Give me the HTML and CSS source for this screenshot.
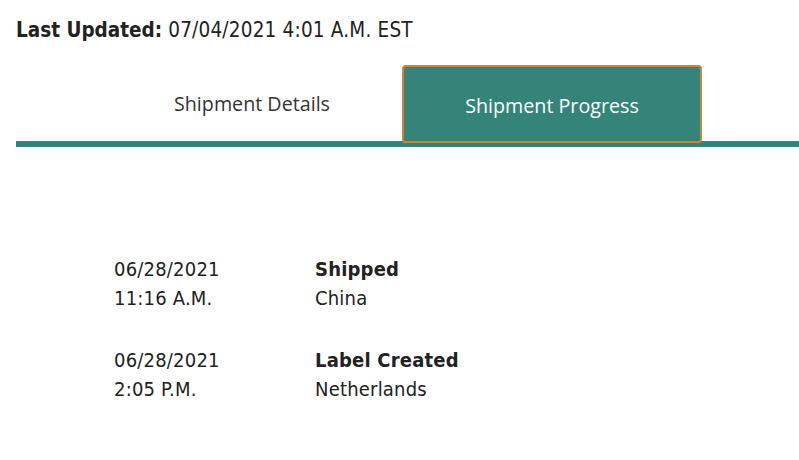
FILE: index.html
```html
<!DOCTYPE html>
<html>
<head>
<meta charset="utf-8">
<link rel="stylesheet" href="styles.css">
</head>
<body>
<div class="page">
  <div class="updated"><b>Last Updated:</b> 07/04/2021 4:01 A.M. EST</div>
  <div class="tabs">
    <div class="tab">Shipment Details</div>
    <div class="tab active">Shipment Progress</div>
  </div>
  <div class="progress">
    <div class="row">
      <div class="when">06/28/2021<br>11:16 A.M.</div>
      <div class="what"><b>Shipped</b><br>China</div>
    </div>
    <div class="row">
      <div class="when">06/28/2021<br>2:05 P.M.</div>
      <div class="what"><b>Label Created</b><br>Netherlands</div>
    </div>
  </div>
</div>
</body>
</html>
```
FILE: styles.css
```css
html, body { margin: 0; padding: 0; background: #fff; }
body { font-family: "DejaVu Sans Condensed", "DejaVu Sans", Verdana, sans-serif; color: #222; overflow: hidden; }
.page { padding: 16px 0 0 16px; }
.updated { font-size: 20.5px; line-height: 28px; letter-spacing: 0.2px; }
.updated b { letter-spacing: 0; }
.tabs {
  margin-top: 21px;
  display: flex;
  padding-left: 86px;
  border-bottom: 6px solid #35847a;
}
.tab {
  width: 300px;
  height: 76px;
  box-sizing: border-box;
  display: flex;
  align-items: center;
  justify-content: center;
  font-family: "Open Sans", "Noto Sans", sans-serif;
  font-size: 19.7px;
  color: #333;
  flex: none;
}
.tab.active {
  background: #35847a;
  color: #fff;
  border: 2px solid #c9853c;
  border-radius: 4px 4px 3px 3px;
  margin-bottom: -4px;
  height: 78px;
  padding-top: 3px;
}
.progress { padding: 108px 0 0 98px; }
.row { display: flex; font-size: 20px; line-height: 29px; letter-spacing: 0.2px; margin-bottom: 33px; }
.when { width: 201px; }
```
